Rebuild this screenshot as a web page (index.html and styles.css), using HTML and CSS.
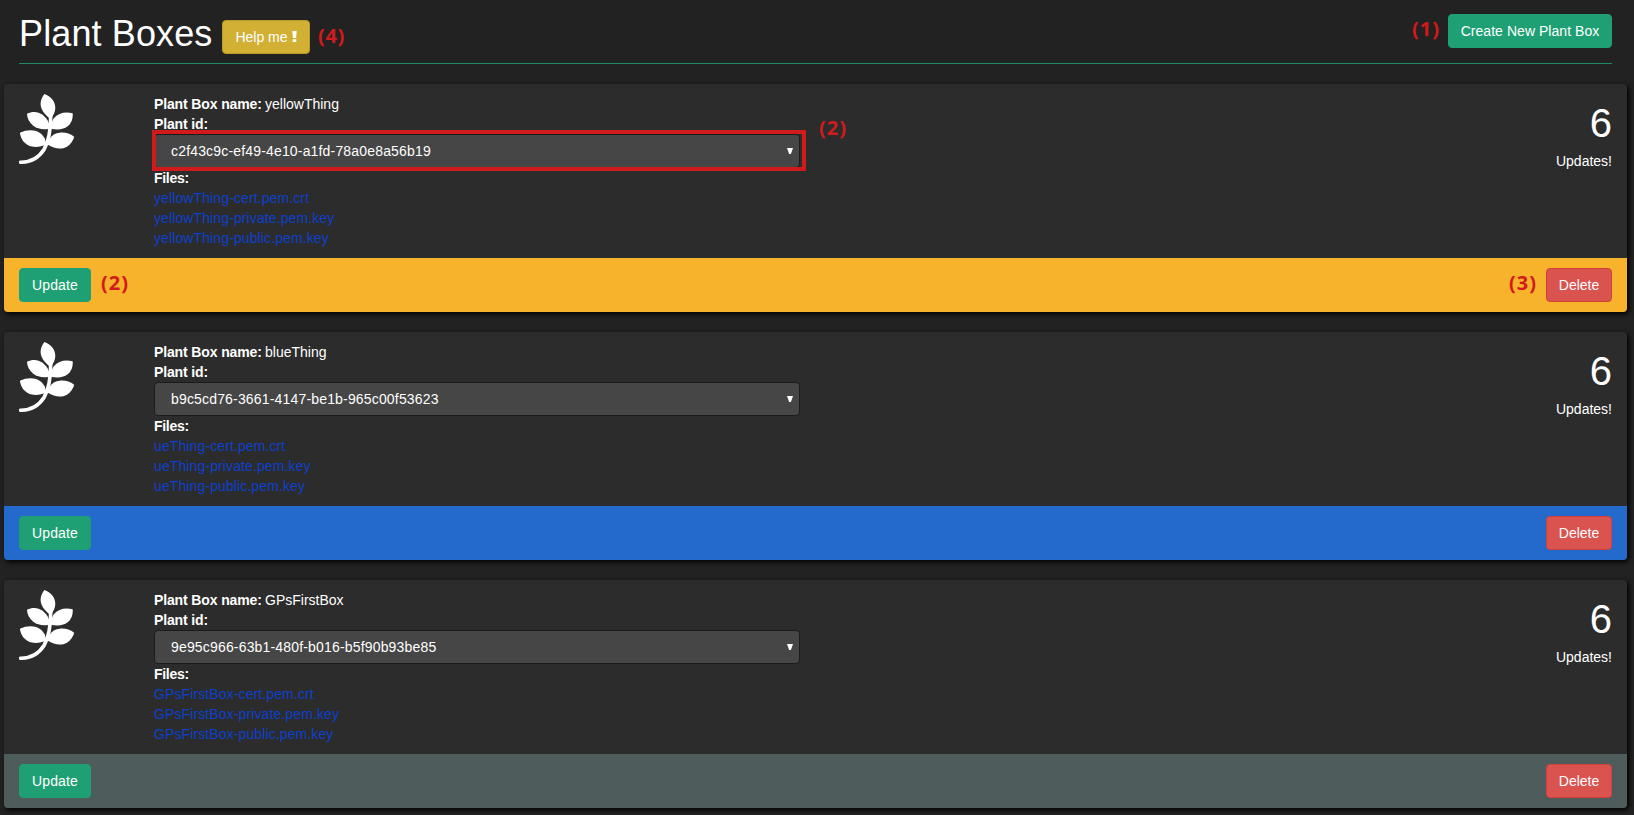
FILE: index.html
```html
<!DOCTYPE html>
<html lang="en">
<head>
<meta charset="utf-8">
<title>Plant Boxes</title>
<link rel="stylesheet" href="styles.css">
</head>
<body>
<svg class="sprite" aria-hidden="true">
  <symbol id="leaf" viewBox="0 0 56 70">
    <path d="M25.3 0C32 2.500 36.500 7.500 36.300 14C36.200 18 34.500 21 32.500 24L30 24C25 19.500 21.500 15 21.600 9.500C21.700 6 23.300 3 25.300 0Z"/>
    <path d="M8 19.700C14 16.800 20 17.500 25 22C28.200 25 29.800 28 30.400 31.500L30.400 34.700C24 36 18.500 35 14 31.500C9.800 28 8.200 24 8 19.700Z"/>
    <path d="M53.700 19.200C46 17.200 39 19.200 35 24C33.200 26.500 32.300 29 32 34.700C39 36.200 45 35.300 49 32C52.800 28.500 54 24 53.700 19.200Z"/>
    <path d="M.9 38.800C8.500 35.200 17 35.500 22 39.800C25.200 42.800 26.700 45.500 27 50.500C21 53.500 14 53.600 9 51.200C4 48.500 1.700 44 .9 38.800Z"/>
    <path d="M55.200 42.800C49 38 42 37.500 36 40C32 41.800 29.500 45 28.800 50.700C35 54.500 42 56 48 52.700C51.800 50.200 54 47 55.200 42.800Z"/>
    <path class="stem" d="M31.700 22C31.700 36 30.500 46 25 55.500C19.500 64 12 68.400 1.500 68.200"/>
  </symbol>
</svg>
<header class="page-header">
  <div class="heading">
    <h1>Plant Boxes</h1>
    <button class="btn btn-warning">Help me<svg class="bang" viewBox="0 0 5 11"><path d="M.3 0h4.400l-.6 7h-3.200zM.7 8.200h3.600v2.800h-3.600z"/></svg></button>
    <span class="note note-help">(4)</span>
  </div>
  <div class="create"><span class="note note-create">(1)</span><button class="btn btn-success">Create New Plant Box</button></div>
</header>
<main>
  <section class="card">
    <div class="card-body">
      <svg class="leaf"><use href="#leaf"/></svg>
      <div class="details">
        <div class="name"><b class="name-label">Plant Box name:</b><span>yellowThing</span></div>
        <div><b class="id-label">Plant id:</b></div>
        <div class="select"><span>c2f43c9c-ef49-4e10-a1fd-78a0e8a56b19</span><i class="arrow"></i><div class="outline"></div><span class="note note-select">(2)</span></div>
        <div><b class="files">Files:</b></div>
        <a>yellowThing-cert.pem.crt</a>
        <a>yellowThing-private.pem.key</a>
        <a>yellowThing-public.pem.key</a>
      </div>
      <div class="stats"><div class="count">6</div><div>Updates!</div></div>
    </div>
    <div class="card-footer yellow">
      <button class="btn btn-success">Update</button><span class="note note-update">(2)</span>
      <span class="note note-delete">(3)</span><button class="btn btn-danger">Delete</button>
    </div>
  </section>
  <section class="card">
    <div class="card-body">
      <svg class="leaf"><use href="#leaf"/></svg>
      <div class="details">
        <div class="name"><b class="name-label">Plant Box name:</b><span>blueThing</span></div>
        <div><b class="id-label">Plant id:</b></div>
        <div class="select"><span>b9c5cd76-3661-4147-be1b-965c00f53623</span><i class="arrow"></i></div>
        <div><b class="files">Files:</b></div>
        <a>ueThing-cert.pem.crt</a>
        <a>ueThing-private.pem.key</a>
        <a>ueThing-public.pem.key</a>
      </div>
      <div class="stats"><div class="count">6</div><div>Updates!</div></div>
    </div>
    <div class="card-footer blue">
      <button class="btn btn-success">Update</button>
      <button class="btn btn-danger">Delete</button>
    </div>
  </section>
  <section class="card">
    <div class="card-body">
      <svg class="leaf"><use href="#leaf"/></svg>
      <div class="details">
        <div class="name"><b class="name-label">Plant Box name:</b><span>GPsFirstBox</span></div>
        <div><b class="id-label">Plant id:</b></div>
        <div class="select"><span>9e95c966-63b1-480f-b016-b5f90b93be85</span><i class="arrow"></i></div>
        <div><b class="files">Files:</b></div>
        <a>GPsFirstBox-cert.pem.crt</a>
        <a>GPsFirstBox-private.pem.key</a>
        <a>GPsFirstBox-public.pem.key</a>
      </div>
      <div class="stats"><div class="count">6</div><div>Updates!</div></div>
    </div>
    <div class="card-footer slate">
      <button class="btn btn-success">Update</button>
      <button class="btn btn-danger">Delete</button>
    </div>
  </section>
</main>
</body>
</html>
```
FILE: styles.css
```css
* { box-sizing: border-box; }

html { height: 100%; overflow: hidden; }

body {
  margin: 0;
  height: 100%;
  overflow: hidden;
  background: #222;
  color: #fff;
  font: 14px/20px "Liberation Sans", Arial, sans-serif;
}

.sprite { position: absolute; width: 0; height: 0; }

.page-header {
  display: flex;
  justify-content: space-between;
  align-items: flex-start;
  height: 64px;
  margin: 0 22px 20px 19px;
  border-bottom: 1px solid #1f8a65;
}

.heading { display: flex; position: relative; padding-top: 13px; }

h1 {
  width: 203px;
  margin: 0;
  padding-top: 1px;
  font-size: 36px;
  font-weight: 400;
  line-height: 40px;
  letter-spacing: .12px;
  white-space: nowrap;
}

.heading .btn { margin-top: 7px; width: 88px; }

.create { position: relative; padding-top: 14px; }
.create .btn { width: 164px; letter-spacing: .05px; }

.btn {
  display: inline-flex;
  align-items: center;
  justify-content: center;
  height: 34px;
  padding: 0;
  border: 1px solid #1e9f74;
  border-radius: 4px;
  background: #1e9f74;
  color: #fff;
  font: inherit;
  white-space: nowrap;
}

.btn-warning { border-color: #b89a26; background: #d1b034; }
.btn-danger { width: 66px; border-color: #d43f3a; background: #d9534f; }

.bang { width: 5px; height: 11px; margin: -1px 0 0 4px; fill: #fff; }

.note {
  position: absolute;
  color: #d11a1b;
  font: 700 20px/24px "Open Sans", "Noto Sans", sans-serif;
  letter-spacing: 1px;
  white-space: nowrap;
}

.note-help { left: 299px; top: 24px; letter-spacing: .6px; }
.note-create { right: 172px; top: 17px; }
.note-select { left: 664px; top: -19px; }
.note-update { left: 97px; top: 13px; }
.note-delete { right: 90px; top: 13px; }

.card {
  width: 1623px;
  height: 228px;
  margin: 0 0 20px 4px;
  border-radius: 4px;
  background: #2c2c2c;
  box-shadow: 2px 2px 5px #000;
}

.card-body { display: flex; height: 174px; padding: 10px 15px; }

.leaf { width: 56px; height: 70px; margin-right: 79px; fill: #fff; }
.stem { fill: none; stroke: #fff; stroke-width: 3.6; stroke-linecap: round; }

.details { width: 646px; }
.details a { display: block; color: #0d40cb; letter-spacing: .11px; }
.name { display: flex; }
.name-label { width: 111px; white-space: nowrap; letter-spacing: -.13px; }
.id-label { letter-spacing: -.13px; }
.files { letter-spacing: -.3px; }

.select {
  display: flex;
  position: relative;
  align-items: center;
  justify-content: space-between;
  height: 34px;
  padding: 0 6px 0 16px;
  border: 1px solid #1c1c1c;
  border-radius: 4px;
  background: #464646;
  letter-spacing: .17px;
}

.arrow {
  width: 6px;
  height: 6px;
  background: #fff;
  clip-path: polygon(0 0, 100% 0, 65% 100%, 35% 100%);
}

.outline {
  position: absolute;
  top: -5px;
  left: -3px;
  width: 654px;
  height: 41px;
  border: 4px solid #d11a1b;
}

.stats { margin-left: auto; text-align: right; }
.count { height: 57px; padding-top: 9px; font-size: 40px; line-height: 40px; }

.card-footer {
  display: flex;
  position: relative;
  justify-content: space-between;
  height: 54px;
  padding: 10px 15px;
  border-radius: 0 0 4px 4px;
}

.card-footer .btn-success { width: 72px; letter-spacing: .15px; }
.yellow { background: #f8b32d; }
.blue { background: #246acd; }
.slate { background: #4e5d5c; }
```
